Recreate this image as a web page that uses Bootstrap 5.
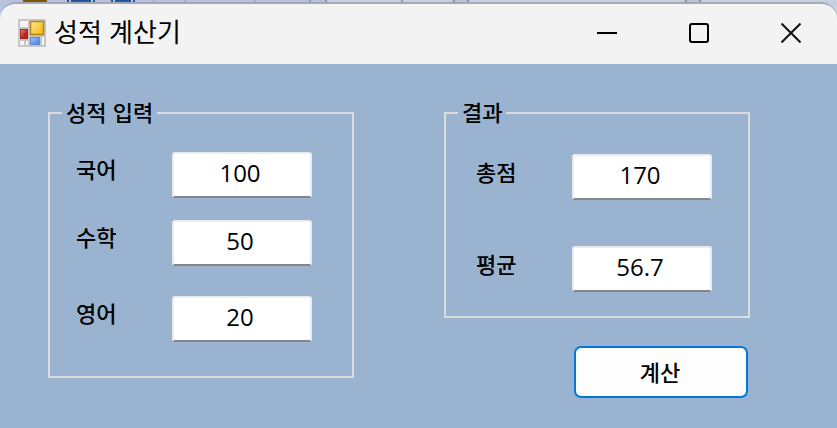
<!DOCTYPE html>
<html lang="ko">
<head>
<meta charset="utf-8">
<meta name="viewport" content="width=device-width, initial-scale=1">
<title>성적 계산기</title>
<link href="https://cdn.jsdelivr.net/npm/bootstrap@5.3.0/dist/css/bootstrap.min.css" rel="stylesheet">
<style>
  body { font-family: "Noto Sans CJK KR", sans-serif; color: #000; background: #b8c2de; overflow: hidden; }
  .backdrop { height: 20px; z-index: 0; }
  .app-window { margin-top: 2px; border-top: 2px solid #a5a9b6; border-radius: 16px 16px 0 0; background: #99b3d1; z-index: 1; overflow: hidden; }
  .title-bar { height: 60px; background: #f3f3f3; padding-left: 18px; padding-bottom: 3px; }
  .title-text { font-size: 26px; line-height: 36px; padding-bottom: 4px; }
  .caption-btn { width: 92px; height: 56px; }
  .form-area { display: grid; grid-template-columns: 1fr 1fr; column-gap: 90px; padding: 36px 87px 30px 48px; }
  .group-box { border: 2px solid #dcdcdc; }
  .group-box legend { font-size: 22px; font-weight: 500; line-height: 22px; padding-bottom: 4px; margin-left: 12px; }
  .input-rows { padding: 26px 40px 34px 26px; }
  .result-rows { padding: 28px 36px 24px 30px; }
  .field-label { font-size: 22px; font-weight: 500; line-height: 30px; padding-bottom: 14px; }
  .result-rows .field-label { padding-bottom: 12px; }
  .field-box { width: 140px; height: 46px; padding: 0 4px 6px 0; font: 500 24px/32px "Open Sans", sans-serif; color: #000; border: 2px solid #ebebeb; border-bottom-color: #868686; border-radius: 3px; }
  .gap-narrow { margin-bottom: 22px; }
  .gap-medium { margin-bottom: 30px; }
  .gap-wide { margin-bottom: 46px; }
  .calc-btn { width: 174px; height: 52px; margin: 28px 2px 0 0; padding: 0 2px 2px 0; font-size: 22px; font-weight: 500; line-height: 32px; color: #000; background: #fdfdfd; border: 2px solid #0078d4; border-radius: 7px; }
</style>
<script src="https://cdn.jsdelivr.net/npm/bootstrap@5.3.0/dist/js/bootstrap.bundle.min.js"></script>
</head>
<body class="min-vh-100 d-flex flex-column position-relative">
  <svg class="backdrop position-absolute top-0 start-0 w-100" viewBox="0 0 837 20" preserveAspectRatio="none" aria-hidden="true">
    <path fill="#b8c2de" d="M0 0h837v20H0z"/>
    <path fill="#c7d0e0" d="M326 0h128v20H326zM468 0h218v20H468zM700 0h137v20H700z"/>
    <path fill="#8f9198" d="M325 0h2v4h-2zM453 0h2v4h-2zM467 0h2v4h-2zM685 0h2v4h-2zM699 0h2v4h-2zM731 2h10v2h-10z"/>
    <path fill="#869bc9" d="M309 0h2v4h-2zM153 0h1v4h-1zM401 0h2v4h-2z"/>
    <path fill="none" stroke="#8d95ab" d="M186 0l-4 4M254 0l4 4"/>
    <path fill="#7d5708" d="M23 0h24v2H23z"/>
    <path fill="none" stroke="#20579f" stroke-width="2" d="M68 0v3h26V0M72 0v1h18V0M112 0v3h22V0M116 0v1h14V0"/>
  </svg>

  <main class="app-window position-relative flex-grow-1">
    <header class="title-bar d-flex align-items-center">
      <svg width="28" height="28" viewBox="0 0 28 28" aria-hidden="true">
        <defs>
          <linearGradient id="gold" x1="0" y1="0" x2="1" y2="1"><stop offset="0" stop-color="#ffe98c"/><stop offset="1" stop-color="#f0b40c"/></linearGradient>
          <linearGradient id="ruby" x1="0" y1="0" x2="1" y2="1"><stop offset="0" stop-color="#ef8d80"/><stop offset=".6" stop-color="#b92418"/></linearGradient>
          <linearGradient id="azure" x1="0" y1="0" x2="1" y2="1"><stop offset="0" stop-color="#9cc5ff"/><stop offset="1" stop-color="#4b80dc"/></linearGradient>
        </defs>
        <path fill="#c6c6c6" d="M0 0h28v28H0z"/>
        <path fill="#f5f5f5" d="M2 2h8v6H2zM2 22h4v4H2zM8 22h2v4H8zM24 18h2v8h-2z"/>
        <rect x="12.500" y="2.500" width="13" height="13" fill="url(#gold)" stroke="#b48817" stroke-width="1.500"/>
        <rect x="2.500" y="10.500" width="7" height="9" fill="url(#ruby)" stroke="#a92620"/>
        <rect x="12.500" y="18.500" width="9" height="7" fill="url(#azure)" stroke="#5b88d3"/>
      </svg>
      <h1 class="title-text mb-0 ms-2 fw-normal me-auto">성적 계산기</h1>
      <button type="button" class="caption-btn btn p-0 border-0" aria-label="최소화">
        <svg width="20" height="20" viewBox="0 0 20 20" class="d-block mx-auto"><path d="M0 10h20" stroke="#000" stroke-width="2"/></svg>
      </button>
      <button type="button" class="caption-btn btn p-0 border-0" aria-label="최대화">
        <svg width="20" height="20" viewBox="0 0 20 20" class="d-block mx-auto"><rect x="1" y="1" width="18" height="18" rx="2" fill="none" stroke="#000" stroke-width="2"/></svg>
      </button>
      <button type="button" class="caption-btn btn p-0 border-0" aria-label="닫기">
        <svg width="20" height="20" viewBox="0 0 20 20" class="d-block mx-auto"><path d="M.5.5l19 19M19.500.5l-19 19" stroke="#111" stroke-width="2"/></svg>
      </button>
    </header>

    <form class="form-area align-items-start">
      <fieldset class="group-box">
        <legend class="float-none w-auto px-1 mb-0">성적 입력</legend>
        <div class="input-rows">
          <div class="d-flex justify-content-between align-items-center gap-narrow">
            <label class="field-label" for="korean">국어</label>
            <input class="field-box text-center" id="korean" type="text" value="100">
          </div>
          <div class="d-flex justify-content-between align-items-center gap-medium">
            <label class="field-label" for="math">수학</label>
            <input class="field-box text-center" id="math" type="text" value="50">
          </div>
          <div class="d-flex justify-content-between align-items-center">
            <label class="field-label" for="english">영어</label>
            <input class="field-box text-center" id="english" type="text" value="20">
          </div>
        </div>
      </fieldset>

      <div class="d-flex flex-column">
        <fieldset class="group-box">
          <legend class="float-none w-auto px-1 mb-0">결과</legend>
          <div class="result-rows">
            <div class="d-flex justify-content-between align-items-center gap-wide">
              <label class="field-label" for="total">총점</label>
              <input class="field-box text-center" id="total" type="text" value="170">
            </div>
            <div class="d-flex justify-content-between align-items-center">
              <label class="field-label" for="average">평균</label>
              <input class="field-box text-center" id="average" type="text" value="56.7">
            </div>
          </div>
        </fieldset>
        <button type="button" class="calc-btn btn align-self-end">계산</button>
      </div>
    </form>
  </main>
</body>
</html>
